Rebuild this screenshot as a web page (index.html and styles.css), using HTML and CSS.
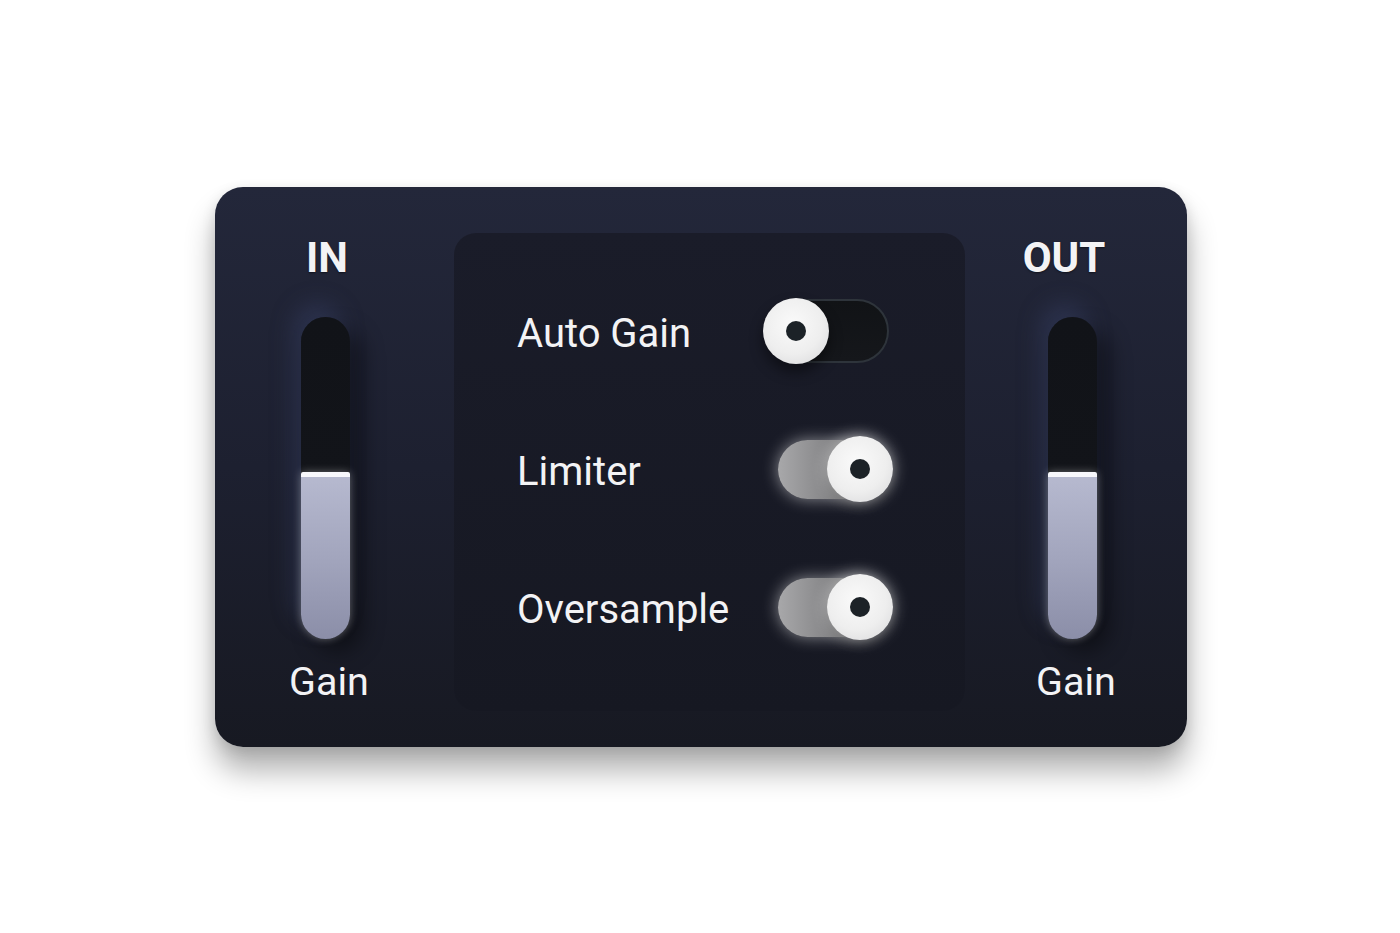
FILE: index.html
```html
<!DOCTYPE html>
<html lang="en">
<head>
	<meta charset="UTF-8">
	<meta name="viewport" content="width=device-width, initial-scale=1.0">
	<title>Gain Stage</title>
	<link rel="stylesheet" href="styles.css">
</head>
<body>
	<div class="plugin">
		<!-- input gain -->
		<div class="strip strip_in">
			<div class="strip_title">IN</div>
			<div class="fader">
				<div class="fader_fill" style="height: 52%"></div>
			</div>
			<div class="strip_label">Gain</div>
		</div>

		<!-- switches -->
		<div class="options">
			<div class="option">
				<span class="option_name">Auto Gain</span>
				<div class="toggle">
					<div class="toggle_track"></div>
					<div class="toggle_knob"></div>
				</div>
			</div>
			<div class="option">
				<span class="option_name">Limiter</span>
				<div class="toggle toggle_on">
					<div class="toggle_track"></div>
					<div class="toggle_knob"></div>
				</div>
			</div>
			<div class="option">
				<span class="option_name">Oversample</span>
				<div class="toggle toggle_on">
					<div class="toggle_track"></div>
					<div class="toggle_knob"></div>
				</div>
			</div>
		</div>

		<!-- output gain -->
		<div class="strip strip_out">
			<div class="strip_title">OUT</div>
			<div class="fader">
				<div class="fader_fill" style="height: 52%"></div>
			</div>
			<div class="strip_label">Gain</div>
		</div>
	</div>
</body>
</html>
```

FILE: styles.css
```css
* {
	padding: 0;
	margin: 0;
	box-sizing: border-box;
}
body {
	min-height: 100vh;
	padding: 187px 0 0 215px;
	background: #fff;
	font-family: Roboto, "Liberation Sans", sans-serif;
	color: #f3f3f5;
}
/* main panel */
.plugin {
	width: 972px;
	height: 560px;
	padding: 46px 12px 36px 0;
	display: grid;
	grid-template-columns: 224px 526px 210px;
	border-radius: 28px;
	background: linear-gradient(180deg, #23273a 0%, #1d2030 50%, #171922 100%);
	box-shadow: 0 24px 30px rgba(0, 0, 0, 0.3), 0 4px 14px rgba(0, 0, 0, 0.12);
}
/* side columns: title, fader, label */
.strip {
	display: flex;
	flex-direction: column;
	align-items: center;
}
.strip_title {
	margin-top: -1px;
	font-size: 42px;
	line-height: 52px;
	font-weight: 700;
	text-shadow: 0 1px 2px rgba(0, 0, 0, 0.5);
}
.strip_label {
	margin-top: 20px;
	font-size: 39.5px;
	line-height: 46px;
	margin-left: 4px;
}
.strip_in .fader {
	margin-left: -3px;
}
.strip_out .strip_title {
	margin-right: 12px;
}
.strip_out .strip_label {
	margin-left: 12px;
}
.strip_out .fader {
	margin-left: 4px;
}
.fader {
	margin-top: 33px;
	width: 49px;
	height: 322px;
	border-radius: 25px;
	background: linear-gradient(180deg, #111318 0%, #13151a 100%);
	display: flex;
	flex-direction: column;
	justify-content: flex-end;
	box-shadow: -8px -14px 22px rgba(60, 70, 110, 0.4), 12px 12px 22px rgba(0, 0, 0, 0.45);
}
.fader_fill {
	border-radius: 2px 2px 25px 25px;
	border-top: 5px solid #f7f7fb;
	background: linear-gradient(180deg, #b6b9cf 0%, #a2a5bd 50%, #8b8ea8 100%);
	box-shadow: 0 0 8px rgba(255, 255, 255, 0.35);
}
/* switches panel */
.options {
	margin-left: 15px;
	border-radius: 22px;
	background: linear-gradient(180deg, #1a1c29 0%, #161822 100%);
	padding: 65px 0 0 63px;
	display: flex;
	flex-direction: column;
	gap: 72px;
}
.option {
	display: flex;
	align-items: center;
	height: 66px;
}
.option_name {
	width: 246px;
	font-size: 40px;
	padding-top: 4px;
}
.toggle {
	position: relative;
	width: 126px;
	height: 66px;
}
.toggle_track {
	position: absolute;
	left: 6px;
	top: 1px;
	width: 120px;
	height: 64px;
	border-radius: 32px;
	border: 2px solid #2e343b;
	background: linear-gradient(180deg, #111316 0%, #15171b 100%);
}
.toggle_knob {
	position: absolute;
	left: 0;
	top: 0;
	width: 66px;
	height: 66px;
	border-radius: 50%;
	background: radial-gradient(circle at 45% 40%, #fafafa 0%, #eeeeee 55%, #d6d6d8 100%);
	box-shadow: 0 8px 14px rgba(0, 0, 0, 0.45);
}
.toggle_knob::before {
	content: "";
	position: absolute;
	left: 50%;
	top: 50%;
	width: 20px;
	height: 20px;
	border-radius: 50%;
	background: #1c2227;
	transform: translate(-50%, -50%);
}
/* switched on */
.toggle_on {
	width: 115px;
	margin-left: 15px;
}
.toggle_on .toggle_track {
	left: 0;
	top: 4px;
	width: 108px;
	height: 59px;
	border: none;
	background: linear-gradient(90deg, #a8a8aa 0%, #8a8a8c 40%, #5a5a5c 100%);
	box-shadow: 0 0 16px rgba(255, 255, 255, 0.5);
}
.toggle_on .toggle_knob {
	left: auto;
	right: 0;
	box-shadow: 0 0 16px rgba(255, 255, 255, 0.55), 0 6px 10px rgba(0, 0, 0, 0.3);
}
```
